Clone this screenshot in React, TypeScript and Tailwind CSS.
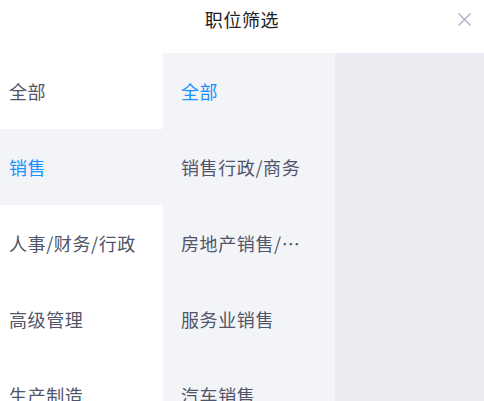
const primary = ['全部', '销售', '人事/财务/行政', '高级管理', '生产制造'];
const secondary = ['全部', '销售行政/商务', '房地产销售/招商', '服务业销售', '汽车销售'];

export default function App() {
  const active = 1;
  const activeSub = 0;

  return (
    <div className="flex h-[401px] w-[484px] flex-col overflow-hidden bg-white font-['Noto_Sans_CJK_SC',sans-serif]">
      <div className="relative flex h-[53px] shrink-0 items-center justify-center">
        <span className="-mt-[14px] text-[18px] tracking-[0.6px] text-[#222]">职位筛选</span>
        <svg
          className="absolute right-[12px] top-[12px] h-[15px] w-[15px]"
          viewBox="0 0 15 15"
          fill="none"
          stroke="#a9adc0"
          strokeWidth="1.3"
        >
          <path d="M1.5 1.5l12 12M13.5 1.5l-12 12" />
        </svg>
      </div>
      <div className="flex min-h-0 flex-1">
        <div className="w-[163px] shrink-0 bg-white">
          {primary.map((p, i) => (
            <div
              key={p}
              className={`flex h-[76px] items-center pl-[9px] text-[18px] tracking-[0.6px] ${
                i === active ? 'bg-[#f3f4f8] text-[#1890ff]' : 'text-[#505569]'
              }`}
            >
              {p}
            </div>
          ))}
        </div>
        <div className="w-[172px] shrink-0 bg-[#f3f4f8]">
          {secondary.map((s, i) => (
            <div
              key={s}
              className={`flex h-[76px] items-center pl-[18px] pr-[30px] text-[18px] tracking-[0.6px] ${
                i === activeSub ? 'text-[#1890ff]' : 'text-[#505569]'
              }`}
            >
              <span className="truncate">{s}</span>
            </div>
          ))}
        </div>
        <div className="flex-1 bg-[#ebecf1]" />
      </div>
    </div>
  );
}
